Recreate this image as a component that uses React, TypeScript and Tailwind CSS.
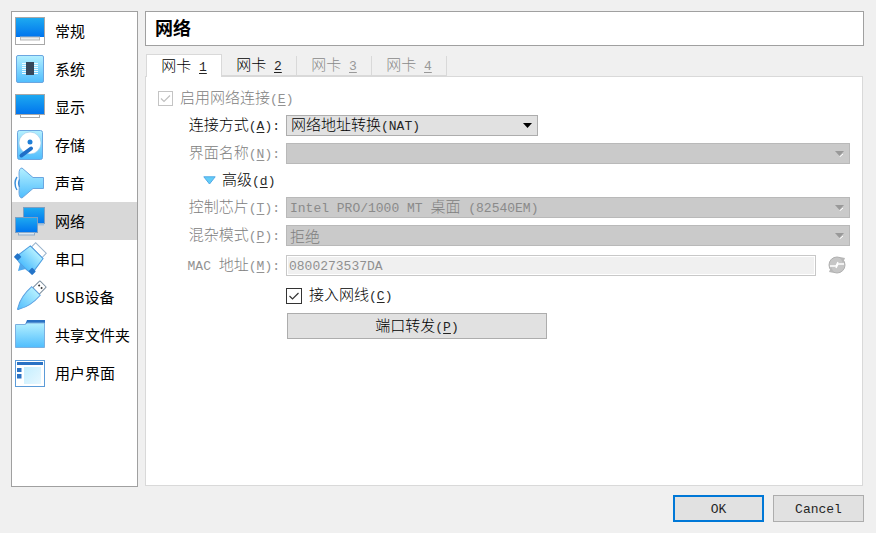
import React from "react";

const CJK = "font-['Noto_Sans_CJK_SC','Noto_Sans_CJK_JP',sans-serif]";
const MONO = "font-['Liberation_Mono',monospace] text-[13px] opacity-85";

// CJK at 15px and latin at the half-width mono size; "&x" underlines x.
function L({ t }: { t: string }) {
  const parts: React.ReactNode[] = [];
  const re = /&(.)|([\x20-\x25\x27-\x7e]+)|([^\x00-\x7f]+)/g;
  let m: RegExpExecArray | null;
  let i = 0;
  while ((m = re.exec(t))) {
    i++;
    if (m[1]) {
      parts.push(<span key={i} className={`${MONO} underline underline-offset-2`}>{m[1]}</span>);
    } else if (m[2]) {
      parts.push(<span key={i} className={`${MONO} whitespace-pre`}>{m[2]}</span>);
    } else {
      parts.push(<span key={i} className={`${CJK} text-[15px] font-light`}>{m[3]}</span>);
    }
  }
  return <span className="inline-block whitespace-pre leading-[20px]">{parts}</span>;
}

function Defs() {
  return (
    <svg width="0" height="0" className="block h-0 w-0">
      <defs>
        <linearGradient id="screen" x1="0" y1="0" x2="0" y2="1">
          <stop offset="0" stopColor="#1eaaf0" />
          <stop offset="1" stopColor="#0074ee" />
        </linearGradient>
        <linearGradient id="light" x1="0" y1="0" x2="0" y2="1">
          <stop offset="0" stopColor="#b4f0ff" />
          <stop offset="1" stopColor="#4fbdfd" />
        </linearGradient>
        <linearGradient id="pale" x1="0" y1="0" x2="1" y2="1">
          <stop offset="0" stopColor="#c4eefe" />
          <stop offset="1" stopColor="#e8f8ff" />
        </linearGradient>
      </defs>
    </svg>
  );
}

const icons: Record<string, React.ReactNode> = {
  general: (
    <>
      <rect x="1.5" y="2.5" width="29" height="27" fill="#fff" stroke="#a8a8a8" />
      <rect x="2" y="3" width="28" height="19" fill="url(#screen)" />
      <rect x="6.5" y="22" width="19" height="3" fill="#ececec" stroke="#b8b8b8" />
    </>
  ),
  system: (
    <>
      <rect x="2.5" y="2.5" width="27" height="27" rx="1.5" fill="url(#light)" stroke="#6ba6e0" />
      <path d="M8 10.5h16M8 12.5h16M8 14.5h16M8 16.5h16M8 18.5h16M8 20.5h16" stroke="#f0fbff" strokeWidth="1" />
      <rect x="12" y="9" width="8" height="13" fill="#36475a" />
    </>
  ),
  display: (
    <>
      <rect x="6.5" y="23" width="19" height="3.5" fill="#fff" stroke="#a8a8a8" />
      <rect x="1.5" y="3.5" width="29" height="20" fill="url(#screen)" stroke="#a8a8a8" />
    </>
  ),
  storage: (
    <>
      <rect x="3.5" y="1.5" width="25" height="29" rx="2" fill="url(#light)" stroke="#6ba6e0" />
      <circle cx="16" cy="14" r="11" fill="#fff" stroke="#8cc4ea" strokeWidth="0.6" />
      <circle cx="16" cy="13" r="2.5" fill="#1f7fd8" />
      <path d="M7.5 26.5 L17 19.5" stroke="#1f6fc8" strokeWidth="4" strokeLinecap="round" />
    </>
  ),
  sound: (
    <>
      <path d="M8 1 L19 10.5 H29.5 V21.5 H19 L8 31 Q5 31 5 25 Q6 16 5 7 Q5 1 8 1Z" fill="url(#light)" stroke="#6ba6e0" />
      <path d="M3 10 Q-1 16 3 23" fill="none" stroke="#3b8fd8" strokeWidth="1.4" />
      <path d="M5.5 12.5 Q3.5 16 5.5 20" fill="none" stroke="#3b8fd8" strokeWidth="1.2" />
    </>
  ),
  network: (
    <>
      <rect x="9.5" y="2.5" width="21" height="16" fill="url(#screen)" stroke="#7d9fc2" />
      <path d="M24 19.5h6" stroke="#a9c4dc" strokeWidth="2" />
      <rect x="1.5" y="12.5" width="22" height="15" fill="url(#screen)" stroke="#7d9fc2" />
      <rect x="4.5" y="27.5" width="16" height="2.5" fill="#d8e6f2" stroke="#8fabc8" />
    </>
  ),
  serial: (
    <g transform="rotate(45 16 16)">
      <rect x="8.5" y="0.5" width="15" height="6" fill="#fff" stroke="#9ab4cc" />
      <path d="M7 6.5 H25 L27 20 Q27.5 26 21 26 H11 Q4.5 26 5 20Z" fill="url(#light)" stroke="#4d9ce0" />
      <path d="M12 26 L16 33 L20 26Z" fill="#4fa8ee" />
      <rect x="3" y="20.5" width="5.5" height="5.5" rx="1" fill="#2474c8" />
      <rect x="23.5" y="20.5" width="5.5" height="5.5" rx="1" fill="#2474c8" />
    </g>
  ),
  usb: (
    <g transform="rotate(45 16 16)">
      <rect x="11.5" y="-2.5" width="9" height="10" rx="0.5" fill="#fff" stroke="#7d8f9f" />
      <rect x="13.5" y="0.5" width="1.6" height="1.8" fill="#333" />
      <rect x="17" y="0.5" width="1.6" height="1.8" fill="#333" />
      <path d="M10 7.5 H22 Q23 22 17 32 Q16 35 15 32 Q9 22 10 7.5Z" fill="url(#light)" stroke="#5a9fe0" />
    </g>
  ),
  folder: (
    <>
      <path d="M13 1 H31 V6 H11Z" fill="#2a72c4" />
      <path d="M1.5 5.5 H11 L13 4 H30.5 V28.5 H1.5Z" fill="url(#light)" stroke="#7ab0e0" />
    </>
  ),
  ui: (
    <>
      <rect x="1.5" y="3.5" width="29" height="26" fill="#fff" stroke="#5b9bd8" />
      <rect x="3" y="5" width="26" height="3" fill="#2a72c4" />
      <rect x="3" y="11" width="4.5" height="4" fill="#2a72c4" />
      <rect x="3" y="17" width="4.5" height="4.5" fill="#2a72c4" />
      <rect x="10" y="10" width="17" height="17" fill="url(#pale)" />
    </>
  ),
};

const items: [string, string][] = [
  ["general", "常规"],
  ["system", "系统"],
  ["display", "显示"],
  ["storage", "存储"],
  ["sound", "声音"],
  ["network", "网络"],
  ["serial", "串口"],
  ["usb", "USB设备"],
  ["folder", "共享文件夹"],
  ["ui", "用户界面"],
];

function Arrow({ disabled }: { disabled?: boolean }) {
  return disabled ? (
    <svg width="9" height="6" viewBox="0 0 9 6" className="shrink-0">
      <path d="M0 0H9L4.5 5Z" fill="#999" />
      <path d="M4.5 6 L8 3" stroke="#fff" strokeWidth="1" />
    </svg>
  ) : (
    <svg width="9" height="5" viewBox="0 0 9 5" className="shrink-0">
      <path d="M0 0H9L4.5 5Z" fill="#000" />
    </svg>
  );
}

function Row({ label, disabled, className, children }: { label: string; disabled?: boolean; className?: string; children: React.ReactNode }) {
  return (
    <div className={`flex h-[21px] items-center ${className ?? ""}`}>
      <div className={`flex w-[134px] items-center justify-end ${disabled ? "text-[#808080]" : "text-black"}`}>
        <L t={label} />
      </div>
      <div className="ml-[6px] flex h-full">{children}</div>
    </div>
  );
}

function DisabledCombo({ text }: { text?: string }) {
  return (
    <div className="flex h-[21px] w-[564px] items-center justify-between border border-[#b9b9b9] bg-[#cacaca] pl-[3px] pr-[5px] text-[#808080]">
      <span className="flex items-center">{text ? <L t={text} /> : null}</span>
      <Arrow disabled />
    </div>
  );
}

function Tab({ label, active, disabled }: { label: string; active?: boolean; disabled?: boolean }) {
  return (
    <div
      className={`flex items-center justify-center border-[#d9d9d9] ${
        active ? "relative z-10 h-[23px] w-[76px] border border-b-0 bg-white" : "mt-[2px] h-[20px] w-[75px] border-b border-r bg-[#f0f0f0]"
      } ${disabled ? "text-[#8a8a8a]" : "text-black"}`}
    >
      <L t={label} />
    </div>
  );
}

export default function App() {
  return (
    <div className="flex h-[533px] w-[876px] flex-col overflow-hidden bg-[#f0f0f0] pl-[11px] pr-[12px] pt-[11px]">
      <Defs />
      <div className="flex h-[476px] gap-[7px]">
        <div className="w-[127px] shrink-0 border border-[#a0a0a0] bg-white">
          {items.map(([k, name]) => (
            <div key={k} className={`flex h-[38px] items-center pl-[2px] ${k === "network" ? "bg-[#d8d8d8]" : ""}`}>
              <svg width="32" height="32" viewBox="0 0 32 32" className="shrink-0 overflow-visible">
                {icons[k]}
              </svg>
              <span className={`ml-[9px] whitespace-nowrap text-[15px] text-black ${CJK}`}>{name}</span>
            </div>
          ))}
        </div>
        <div className="flex w-[719px] flex-col">
          <div className={`flex h-[35px] items-center border border-[#a0a0a0] bg-white pb-[2px] pl-[9px] text-[18px] font-bold text-black ${CJK}`}>网络</div>
          <div className="mt-[8px] flex h-[23px] pl-px">
            <Tab label="网卡 &1" active />
            <Tab label="网卡 &2" />
            <Tab label="网卡 &3" disabled />
            <Tab label="网卡 &4" disabled />
          </div>
          <div className="-mt-px h-[410px] w-[718px] border border-[#d9d9d9] bg-white">
            <div className="mt-[13px] flex h-[16px] items-center pl-[12px] text-[#808080]">
              <svg width="15" height="15" viewBox="0 0 15 15" className="shrink-0">
                <rect x="0.5" y="0.5" width="14" height="14" fill="#fff" stroke="#c4c4c4" />
                <path d="M3 7.5 L6 10.5 L12 4.5" fill="none" stroke="#c0c0c0" strokeWidth="1.2" />
              </svg>
              <span className="ml-[7px] flex items-center"><L t="启用网络连接(&E)" /></span>
            </div>
            <Row label="连接方式(&A):" className="mt-[9px]">
              <div className="flex h-[21px] w-[252px] items-center justify-between border border-[#adadad] bg-[#e1e1e1] pl-[4px] pr-[5px] text-black">
                <span className="flex items-center"><L t="网络地址转换(NAT)" /></span>
                <Arrow />
              </div>
            </Row>
            <Row label="界面名称(&N):" disabled className="mt-[7px]">
              <DisabledCombo />
            </Row>
            <div className="mt-[6px] flex h-[21px] items-center pl-[57px]">
              <svg width="13" height="9" viewBox="0 0 13 9" className="shrink-0">
                <path d="M0.8 0.8 H12.2 L6.5 8Z" fill="#63cdf7" stroke="#52a8e6" />
              </svg>
              <span className="ml-[6px] flex items-center text-black"><L t="高级(&d)" /></span>
            </div>
            <Row label="控制芯片(&T):" disabled className="mt-[6px]">
              <DisabledCombo text="Intel PRO/1000 MT 桌面 (82540EM)" />
            </Row>
            <Row label="混杂模式(&P):" disabled className="mt-[7px]">
              <DisabledCombo text="拒绝" />
            </Row>
            <Row label="MAC 地址(&M):" disabled className="mt-[9px]">
              <div className="flex h-[21px] w-[530px] items-center border border-[#c8c8c8] bg-[#f0f0f0] pl-[2px] text-[#808080] outline outline-1 -outline-offset-2 outline-white">
                <L t="0800273537DA" />
              </div>
              <svg width="20" height="20" viewBox="0 0 20 20" className="ml-[11px] shrink-0">
                <circle cx="10" cy="10" r="8" fill="#c6c6c6" stroke="#b0b0b0" />
                <path d="M13 2 L18 3 L16 8Z" fill="#b8b8b8" />
                <path d="M7 18 L2 17 L4 12Z" fill="#b8b8b8" />
                <path d="M3 11 H9 L11 7 M17 9 H11 L9 13" fill="none" stroke="#fff" strokeWidth="1.4" />
              </svg>
            </Row>
            <div className="ml-[140px] mt-[12px] flex h-[15px] items-center text-black">
              <svg width="16" height="16" viewBox="0 0 16 16" className="shrink-0">
                <rect x="0.5" y="0.5" width="15" height="15" fill="#fff" stroke="#333" />
                <path d="M3.5 8 L6.5 11 L12.5 5" fill="none" stroke="#333" strokeWidth="1.2" />
              </svg>
              <span className="ml-[7px] flex items-center"><L t="接入网线(&C)" /></span>
            </div>
            <div className="ml-[141px] mt-[10px] flex h-[26px] w-[260px] items-center justify-center border border-[#adadad] bg-[#e1e1e1] text-black">
              <L t="端口转发(&P)" />
            </div>
          </div>
        </div>
      </div>
      <div className="mt-[8px] flex justify-end gap-[9px]">
        <div className="flex h-[27px] w-[91px] items-center justify-center border-2 border-[#0078d7] bg-[#e1e1e1] text-black"><L t="OK" /></div>
        <div className="flex h-[27px] w-[91px] items-center justify-center border border-[#adadad] bg-[#e1e1e1] text-black"><L t="Cancel" /></div>
      </div>
    </div>
  );
}
